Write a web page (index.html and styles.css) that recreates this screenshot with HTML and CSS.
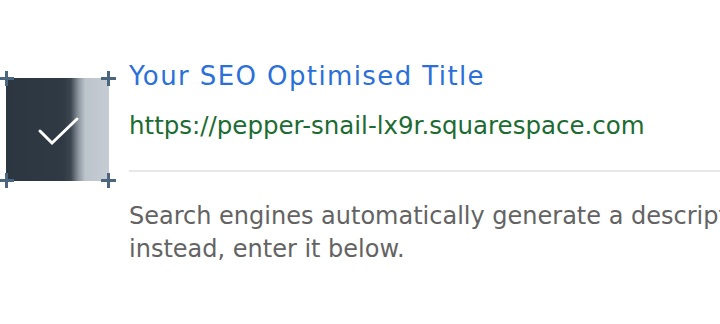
FILE: index.html
```html
<!DOCTYPE html>
<html>
<head>
<meta charset="utf-8">
<link rel="stylesheet" href="styles.css">
</head>
<body>
<div class="page">
  <div class="thumb-wrap">
    <div class="thumb">
      <svg class="check" width="103" height="103" viewBox="0 0 103 103">
        <path d="M34 53 L46 65 L71 41" fill="none" stroke="#fff" stroke-width="3" stroke-linecap="round" stroke-linejoin="miter"/>
      </svg>
    </div>
    <span class="cross tl"></span>
    <span class="cross tr"></span>
    <span class="cross bl"></span>
    <span class="cross br"></span>
  </div>
  <div class="content">
    <div class="title">Your SEO Optimised Title</div>
    <div class="url">https://pepper-snail-lx9r.squarespace.com</div>
    <div class="rule"></div>
    <p class="desc">Search engines automatically generate a description based on your page content. To write your own description<br>instead, enter it below.</p>
  </div>
</div>
</body>
</html>
```
FILE: styles.css
```css
html, body {
  margin: 0;
  padding: 0;
  background: #fff;
  width: 720px;
  height: 324px;
  overflow: hidden;
}
.page {
  display: flex;
  align-items: flex-start;
  padding: 60px 0 0 6px;
  font-family: "DejaVu Sans", Verdana, sans-serif;
  overflow: hidden;
}
.thumb-wrap {
  position: relative;
  width: 103px;
  height: 103px;
  margin-top: 18px;
  flex: none;
}
.thumb {
  width: 103px;
  height: 103px;
  background: linear-gradient(to right, #2c3640 0%, #303a44 56%, #3d4751 63%, #8a939c 70%, #bcc4cc 77%, #c5ccd4 100%);
}
.check {
  display: block;
}
.cross {
  position: absolute;
  width: 15px;
  height: 15px;
}
.cross::before, .cross::after {
  content: "";
  position: absolute;
  background: #4d6680;
}
.cross::before {
  left: 6px;
  top: 0;
  width: 3px;
  height: 15px;
}
.cross::after {
  top: 6px;
  left: 0;
  width: 15px;
  height: 3px;
}
.cross.tl { left: -7px; top: -7px; }
.cross.tr { right: -7px; top: -7px; }
.cross.bl { left: -7px; bottom: -7px; }
.cross.br { right: -7px; bottom: -7px; }
.content {
  margin-left: 20px;
  flex: 1;
  min-width: 0;
}
.title {
  color: #2b6fd9;
  font-size: 26px;
  letter-spacing: 1.4px;
  line-height: 32px;
  white-space: nowrap;
}
.url {
  color: #1c6b32;
  font-size: 24.5px;
  line-height: 32px;
  margin-top: 18px;
  white-space: nowrap;
}
.rule {
  height: 2px;
  background: #e8e8e8;
  margin-top: 28px;
  margin-right: -20px;
}
.desc {
  margin: 28px 0 0 0;
  color: #636363;
  font-size: 24px;
  line-height: 33px;
  white-space: nowrap;
}
```
